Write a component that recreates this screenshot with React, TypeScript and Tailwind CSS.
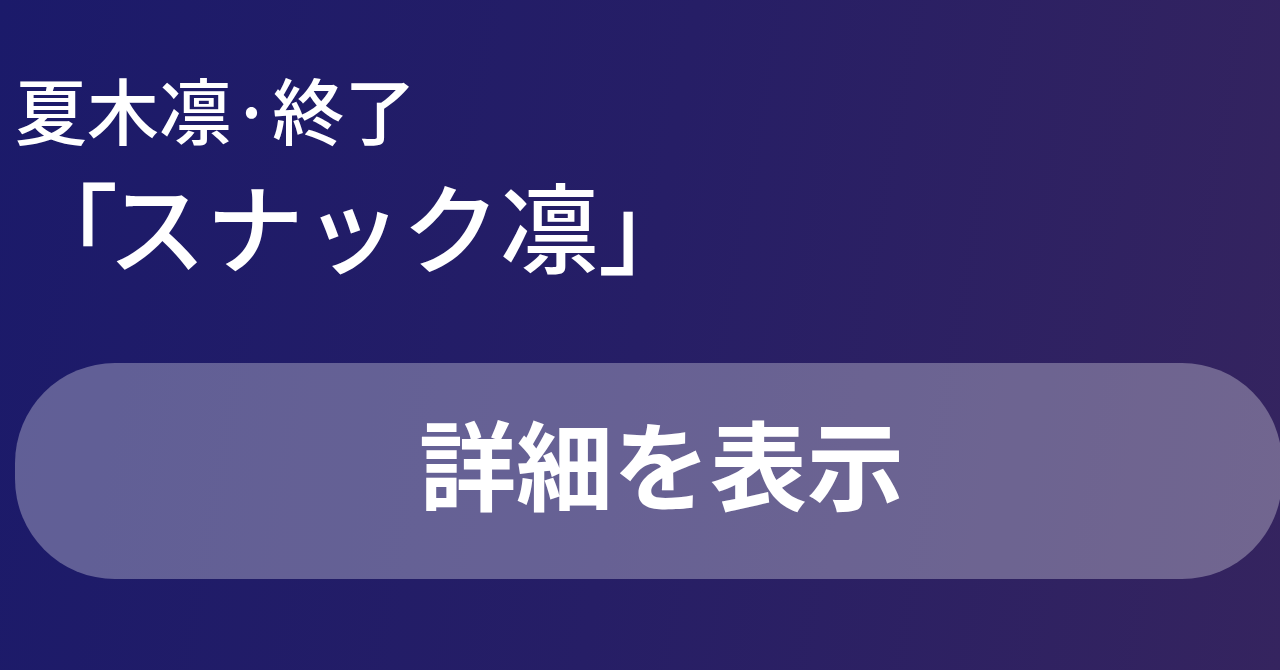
export default function App() {
  return (
    <div
      className="w-[1280px] h-[670px] overflow-hidden bg-[linear-gradient(100deg,#1b1a6a_0%,#261e66_50%,#35245f_100%)] text-white"
      style={{ fontFamily: '"Noto Sans CJK JP", "Noto Sans", sans-serif' }}
    >
      <div className="flex flex-col pt-[72px]">
        {/* status line */}
        <p className="pl-[15px] text-[72px] font-medium leading-none">夏木凛·終了</p>

        {/* shop name, opening bracket set a bit tighter */}
        <p className="mt-[30px] pl-[20px] text-[98px] font-medium leading-none">
          <span className="tracking-[-10px]">「</span>スナック凛」
        </p>

        {/* details pill */}
        <button className="mt-[91px] ml-[15px] w-[1267px] h-[216px] shrink-0 rounded-[100px] bg-white/30 flex items-center justify-center pl-[26px] pb-[22px]">
          <span className="text-[97px] font-bold leading-none">詳細を表示</span>
        </button>
      </div>
    </div>
  );
}
